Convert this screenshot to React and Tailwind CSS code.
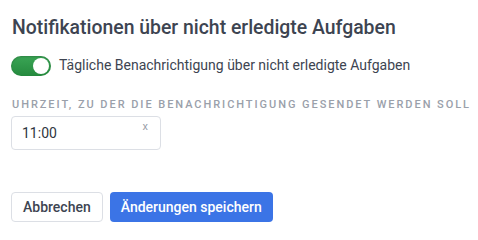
export default function App() {
  return (
    <div className="bg-white w-[478px] h-[232px] px-3 pt-[14px] font-['Roboto',sans-serif]">
      <h2 className="text-[19.4px] leading-7 font-medium text-[#3d4451]">
        Notifikationen über nicht erledigte Aufgaben
      </h2>
      <div className="flex items-center gap-2 mt-[13px] -ml-px">
        <button className="relative w-10 h-5 rounded-full bg-gradient-to-b from-[#3aa555] to-[#258a3e] shadow-[inset_0_1px_2px_rgba(0,0,0,0.2)]">
          <span className="absolute right-[2px] top-[2px] w-4 h-4 rounded-full bg-white" />
        </button>
        <span className="text-[14px] text-[#3d4451]">
          Tägliche Benachrichtigung über nicht erledigte Aufgaben
        </span>
      </div>
      <label className="block whitespace-nowrap mt-[21px] text-[11px] leading-[16px] font-medium uppercase tracking-[1.95px] text-[#9aa0aa]">
        Uhrzeit, zu der die Benachrichtigung gesendet werden soll
      </label>
      <div className="mt-[3px] w-[150px] h-[34px] border border-[#dcdfe5] rounded flex items-center justify-between pl-[10px] pr-[12px] -ml-px">
        <span className="text-[14px] text-[#2f3540]">11:00</span>
        <span className="text-[11px] text-[#9aa0aa] -mt-3">x</span>
      </div>
      <div className="flex gap-[7px] mt-[42px] -ml-px">
        <button className="h-[30px] px-[11px] border border-[#dcdfe5] rounded text-[14px] font-medium text-[#3d4451] bg-white">
          Abbrechen
        </button>
        <button className="h-[30px] px-[11px] rounded text-[14px] font-medium text-white bg-[#3b74e6]">
          Änderungen speichern
        </button>
      </div>
    </div>
  );
}
